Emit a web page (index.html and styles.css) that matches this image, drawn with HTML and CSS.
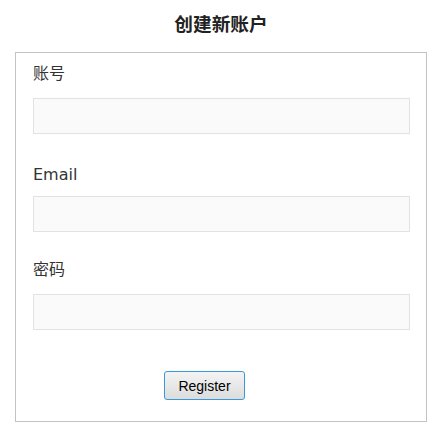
FILE: index.html
```html
<!DOCTYPE html>
<html lang="zh">
<head>
  <meta charset="UTF-8" />
  <meta name="viewport" content="width=device-width, initial-scale=1.0"/>
  <title>创建新账户</title>
  <link rel="stylesheet" href="styles.css">
</head>
<body>

  <div class="page">
    <h1 class="title">创建新账户</h1>

    <form class="form-box">
      <div class="field">
        <label>账号</label>
        <input type="text" />
      </div>
      <div class="field">
        <label class="latin">Email</label>
        <input type="email" />
      </div>
      <div class="field">
        <label>密码</label>
        <input type="password" />
      </div>
      <div class="actions">
        <button type="submit" class="btn">Register</button>
      </div>
    </form>
  </div>

</body>
</html>
```

FILE: styles.css
```css
* {
  margin: 0; padding: 0; box-sizing: border-box;
}
body {
  background: #fff;
  color: #333;
  font-family: "DejaVu Sans", "Noto Sans CJK SC", sans-serif;
}
.page {
  width: 412px;
  margin-left: 15px;
}
.title {
  font-family: "Noto Sans CJK SC", sans-serif;
  font-size: 18.67px;
  font-weight: bold;
  color: #222;
  text-align: center;
  line-height: 26px;
  padding: 10px 0 16px;
}
.form-box {
  border: 1px solid #c3c3c3;
  padding: 9px 16px 21px 17px;
}
.field {
  margin-bottom: 26px;
}
.field label {
  display: block;
  font-size: 16px;
  line-height: 24px;
  margin-bottom: 12px;
  color: #333;
}
.field label.latin {
  padding-top: 3px;
  margin-bottom: 9px;
}
.field input {
  display: block;
  width: 100%;
  height: 36px;
  border: 1px solid #e2e2e2;
  background: #fafafa;
  outline: none;
}
.actions {
  padding-top: 15px;
  padding-left: 131px;
}
.btn {
  display: block;
  width: 81px;
  height: 29px;
  font-family: "Liberation Sans", Arial, sans-serif;
  font-size: 14px;
  color: #000;
  background: linear-gradient(#f4f4f4, #dcdcdc);
  border: 1px solid #3a9ad8;
  border-radius: 3px;
  cursor: pointer;
}
```
